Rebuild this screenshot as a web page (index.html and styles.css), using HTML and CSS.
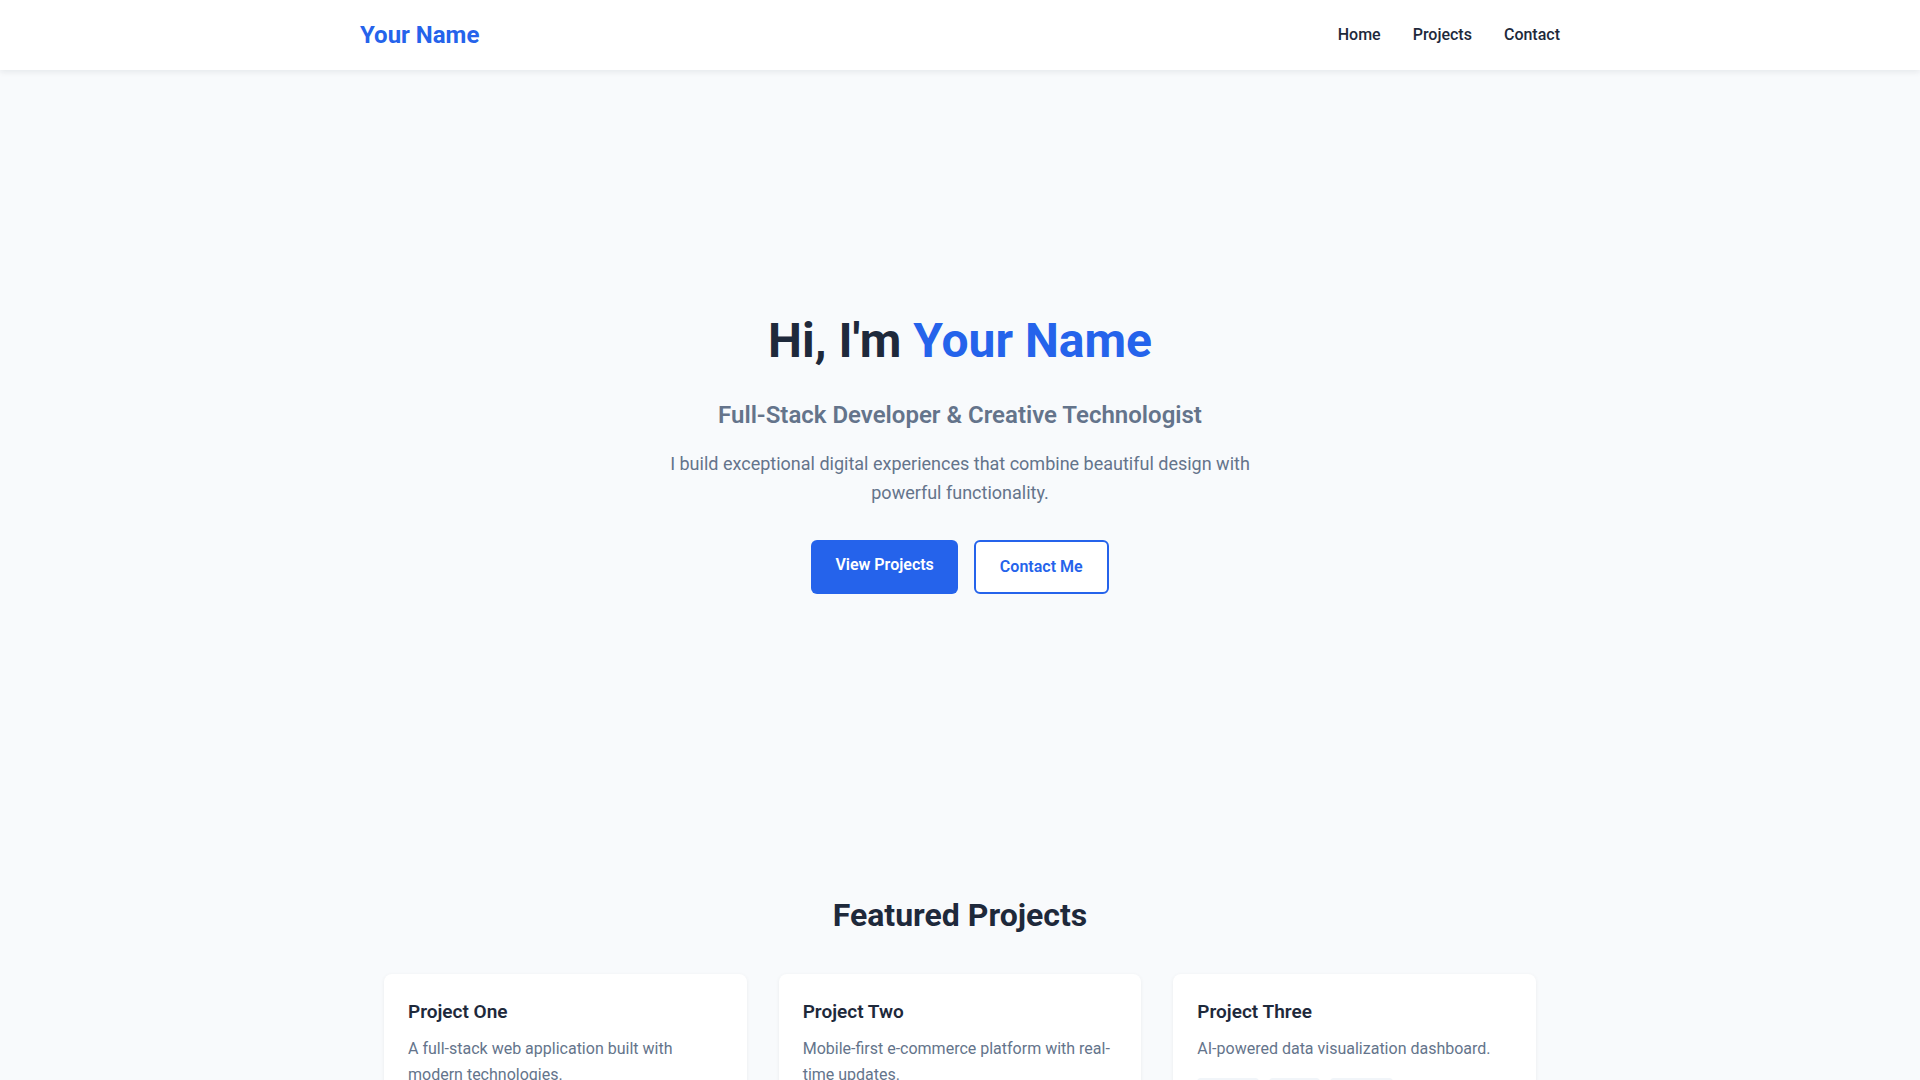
FILE: index.html
```html
<!DOCTYPE html>
<html lang="en">
<head>
<meta charset="utf-8">
<title>Your Name — Portfolio</title>
<link rel="stylesheet" href="styles.css">
</head>
<body>
<header class="navbar">
  <div class="nav-inner">
    <a class="logo" href="#">Your Name</a>
    <nav class="nav-links">
      <a href="#">Home</a>
      <a href="#projects">Projects</a>
      <a href="#contact">Contact</a>
    </nav>
  </div>
</header>

<section class="hero">
  <div class="hero-content">
    <h1 class="hero-title">Hi, I'm <span class="accent">Your Name</span></h1>
    <h2 class="hero-subtitle">Full-Stack Developer &amp; Creative Technologist</h2>
    <p class="hero-text">I build exceptional digital experiences that combine beautiful design with powerful functionality.</p>
    <div class="hero-actions">
      <a class="btn btn-primary" href="#projects">View Projects</a>
      <a class="btn btn-outline" href="#contact">Contact Me</a>
    </div>
  </div>
</section>

<section class="projects" id="projects">
  <div class="container">
    <h2 class="section-title">Featured Projects</h2>
    <div class="project-grid">
      <article class="card">
        <h3 class="card-title">Project One</h3>
        <p class="card-text">A full-stack web application built with modern technologies.</p>
        <div class="tags"><span class="tag">React</span><span class="tag">Node.js</span><span class="tag">MongoDB</span></div>
      </article>
      <article class="card">
        <h3 class="card-title">Project Two</h3>
        <p class="card-text">Mobile-first e-commerce platform with real-time updates.</p>
        <div class="tags"><span class="tag">Vue</span><span class="tag">Firebase</span><span class="tag">Stripe</span></div>
      </article>
      <article class="card">
        <h3 class="card-title">Project Three</h3>
        <p class="card-text">AI-powered data visualization dashboard.</p>
        <div class="tags"><span class="tag">Python</span><span class="tag">D3.js</span><span class="tag">OpenAI</span></div>
      </article>
    </div>
  </div>
</section>
</body>
</html>
```

FILE: styles.css
```css
* {
  box-sizing: border-box;
}

html, body {
  margin: 0;
  padding: 0;
}

body {
  font-family: Roboto, "Liberation Sans", Arial, sans-serif;
  background: #f8fafc;
  color: #1e293b;
}

a {
  text-decoration: none;
}

.navbar {
  background: #ffffff;
  height: 70px;
  box-shadow: 0 2px 6px rgba(15, 23, 42, 0.08);
  position: relative;
  z-index: 2;
}

.nav-inner {
  max-width: 1200px;
  height: 100%;
  margin: 0 auto;
  display: flex;
  align-items: center;
  justify-content: space-between;
}

.logo {
  font-size: 24px;
  font-weight: 700;
  color: #2563eb;
}

.nav-links {
  display: flex;
  gap: 32px;
  padding-bottom: 2px;
}

.nav-links a {
  font-size: 16px;
  font-weight: 500;
  color: #1e293b;
}

.hero {
  min-height: 766px;
  display: flex;
  align-items: center;
  justify-content: center;
  text-align: center;
}

.hero-content {
  display: flex;
  flex-direction: column;
  align-items: center;
}

.hero-title {
  margin: 0 0 32px;
  font-size: 48px;
  line-height: 1.2;
  font-weight: 700;
  color: #1e293b;
}

.accent {
  color: #2563eb;
}

.hero-subtitle {
  margin: 0 0 20px;
  font-size: 24px;
  line-height: 1.2;
  font-weight: 600;
  color: #64748b;
}

.hero-text {
  margin: 0 0 33px;
  max-width: 600px;
  font-size: 18px;
  line-height: 1.6;
  color: #64748b;
}

.hero-actions {
  display: flex;
  gap: 16px;
}

.btn {
  display: inline-block;
  font-size: 16px;
  font-weight: 600;
  line-height: 22px;
  border-radius: 6px;
}

.btn-primary {
  background: #2563eb;
  color: #ffffff;
  padding: 14px 24px 18px;
}

.btn-outline {
  background: #ffffff;
  color: #2563eb;
  border: 2px solid #2563eb;
  padding: 14px 24px;
}

.projects {
  padding: 60px 0 80px;
}

.container {
  max-width: 1200px;
  margin: 0 auto;
  padding: 0 24px;
}

.section-title {
  margin: 0 0 40px;
  text-align: center;
  font-size: 32px;
  line-height: 1.2;
  font-weight: 700;
  color: #1e293b;
}

.project-grid {
  display: grid;
  grid-template-columns: repeat(3, 1fr);
  gap: 32px;
}

.card {
  background: #ffffff;
  border-radius: 8px;
  padding: 26px 24px 24px;
  box-shadow: 0 1px 4px rgba(15, 23, 42, 0.06);
}

.card-title {
  margin: 0 0 12px;
  font-size: 19px;
  line-height: 1.25;
  font-weight: 600;
  color: #1e293b;
}

.card-text {
  margin: 0 0 16px;
  font-size: 16px;
  line-height: 1.6;
  color: #64748b;
}

.tags {
  display: flex;
  flex-wrap: wrap;
  gap: 10px;
}

.tag {
  background: #f1f5f9;
  color: #475569;
  font-size: 12px;
  padding: 4px 12px;
  border-radius: 4px;
}
```
